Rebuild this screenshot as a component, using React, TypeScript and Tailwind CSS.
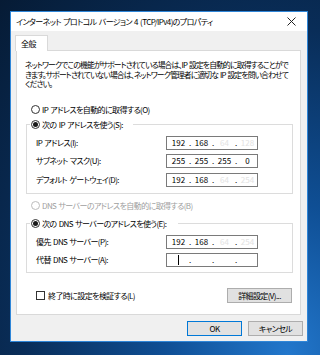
import React from 'react';

function Radio({ checked, disabled }: { checked?: boolean; disabled?: boolean }) {
  return (
    <span
      className={`flex h-[9px] w-[9px] shrink-0 items-center justify-center rounded-full border bg-white ${
        disabled ? 'border-[#bcbcbc]' : 'border-[#333333]'
      }`}
    >
      {checked && <span className="h-[5px] w-[5px] rounded-full bg-[#1a1a1a]" />}
    </span>
  );
}

function IpBox({ octets, faded = [], caret }: { octets: string[]; faded?: number[]; caret?: boolean }) {
  return (
    <div className="flex h-[14px] w-[92px] shrink-0 items-center border border-[#7a7a7a] bg-white pl-[3px] leading-none tracking-normal">
      {octets.map((o, i) => (
        <React.Fragment key={i}>
          <span
            className={`flex w-[17px] justify-center ${faded.includes(i) ? 'text-[#e2e2e2]' : 'text-black'}`}
          >
            {caret && i === 0 ? <span className="h-[10px] w-px bg-black" /> : o}
          </span>
          {i < 3 && <span className="w-[6px] text-center">.</span>}
        </React.Fragment>
      ))}
    </div>
  );
}

function Field({ label, children }: { label: string; children: React.ReactNode }) {
  return (
    <div className="flex h-[14px] items-center pl-[9px] pr-[34px]">
      <span className="flex-1 whitespace-nowrap">{label}</span>
      {children}
    </div>
  );
}

function Button({ children, primary, className = '' }: { children: React.ReactNode; primary?: boolean; className?: string }) {
  return (
    <button
      className={`flex h-[15px] w-[55px] items-center justify-center border bg-[#e1e1e1] leading-none text-black ${
        primary ? 'border-[#0078d7]' : 'border-[#adadad]'
      } ${className}`}
    >
      {children}
    </button>
  );
}

export default function App() {
  return (
    <div className="h-[355px] w-[320px] overflow-hidden bg-[radial-gradient(ellipse_at_90%_100%,#2277cc_0%,#0f4f95_30%,#092d58_65%,#061b35_100%)] pl-[10px] pt-[11px] font-['Noto_Sans_CJK_JP',sans-serif] text-[8px] tracking-[-0.6px] text-black [font-feature-settings:'palt'] [word-spacing:1px]">
      <div className="flex h-[331px] w-[298px] flex-col border border-[#2f86d8] bg-[#f0f0f0]">
        {/* title bar */}
        <div className="flex h-[19px] shrink-0 items-center justify-between bg-white pl-[5px] pr-[11px]">
          <span className="whitespace-nowrap">インターネット プロトコル バージョン 4 (TCP/IPv4)のプロパティ</span>
          <svg width="9" height="9" viewBox="0 0 9 9">
            <path d="M0.5 0.5 L8.5 8.5 M8.5 0.5 L0.5 8.5" stroke="#222" strokeWidth="1" />
          </svg>
        </div>

        {/* tab */}
        <div className="ml-[4px] mt-[4px] flex">
          <div className="relative z-10 -mb-px flex h-[16px] w-[33px] items-center border border-b-0 border-[#d9d9d9] bg-white pl-[5px]">
            全般
          </div>
        </div>

        {/* panel */}
        <div className="ml-[5px] mr-[6px] flex h-[265px] flex-col border border-[#d9d9d9] bg-white">
          <p className="whitespace-nowrap pl-[8px] pt-[9px] text-[7.8px] leading-[9.5px] tracking-[-0.85px]">
            ネットワークでこの機能がサポートされている場合は、IP 設定を自動的に取得することがで
            <br />
            きます。サポートされていない場合は、ネットワーク管理者に適切な IP 設定を問い合わせて
            <br />
            ください。
          </p>

          <div className="ml-[14px] mt-[15px] flex h-[12px] items-center gap-[2px]">
            <Radio />
            <span>IP アドレスを自動的に取得する(O)</span>
          </div>

          <fieldset className="ml-[9px] mr-[7px] mt-[3px] border border-[#dcdcdc] pb-[6px]">
            <legend className="ml-[3px] flex h-[12px] w-[103px] items-center gap-[2px] pl-[1px]">
              <Radio checked />
              <span className="whitespace-nowrap">次の IP アドレスを使う(S):</span>
            </legend>
            <div className="flex flex-col gap-[4.5px] pt-[5px]">
              <Field label="IP アドレス(I):">
                <IpBox octets={['192', '168', '64', '128']} faded={[2, 3]} />
              </Field>
              <Field label="サブネット マスク(U):">
                <IpBox octets={['255', '255', '255', '0']} />
              </Field>
              <Field label="デフォルト ゲートウェイ(D):">
                <IpBox octets={['192', '168', '64', '254']} faded={[2, 3]} />
              </Field>
            </div>
          </fieldset>

          <div className="ml-[14px] mt-[6px] flex h-[12px] items-center gap-[2px] text-[#a0a0a0]">
            <Radio disabled />
            <span>DNS サーバーのアドレスを自動的に取得する(B)</span>
          </div>

          <fieldset className="ml-[9px] mr-[7px] mt-[6px] border border-[#dcdcdc] pb-[5px]">
            <legend className="ml-[3px] flex h-[12px] w-[148px] items-center gap-[2px] pl-[1px]">
              <Radio checked />
              <span className="whitespace-nowrap">次の DNS サーバーのアドレスを使う(E):</span>
            </legend>
            <div className="flex flex-col gap-[4.5px] pt-[5px]">
              <Field label="優先 DNS サーバー(P):">
                <IpBox octets={['192', '168', '64', '254']} faded={[2, 3]} />
              </Field>
              <Field label="代替 DNS サーバー(A):">
                <IpBox octets={['', '', '', '']} caret />
              </Field>
            </div>
          </fieldset>

          <div className="ml-[19px] mr-[8px] mt-[15px] flex h-[15px] items-center">
            <span className="h-[9px] w-[9px] shrink-0 border border-[#333333] bg-white" />
            <span className="ml-[3px] flex-1">終了時に設定を検証する(L)</span>
            <Button className="w-[65px]">詳細設定(V)...</Button>
          </div>
        </div>

        {/* dialog buttons */}
        <div className="mt-[6px] flex justify-end gap-[6px] pr-[4px]">
          <Button primary>OK</Button>
          <Button>キャンセル</Button>
        </div>
      </div>
    </div>
  );
}
